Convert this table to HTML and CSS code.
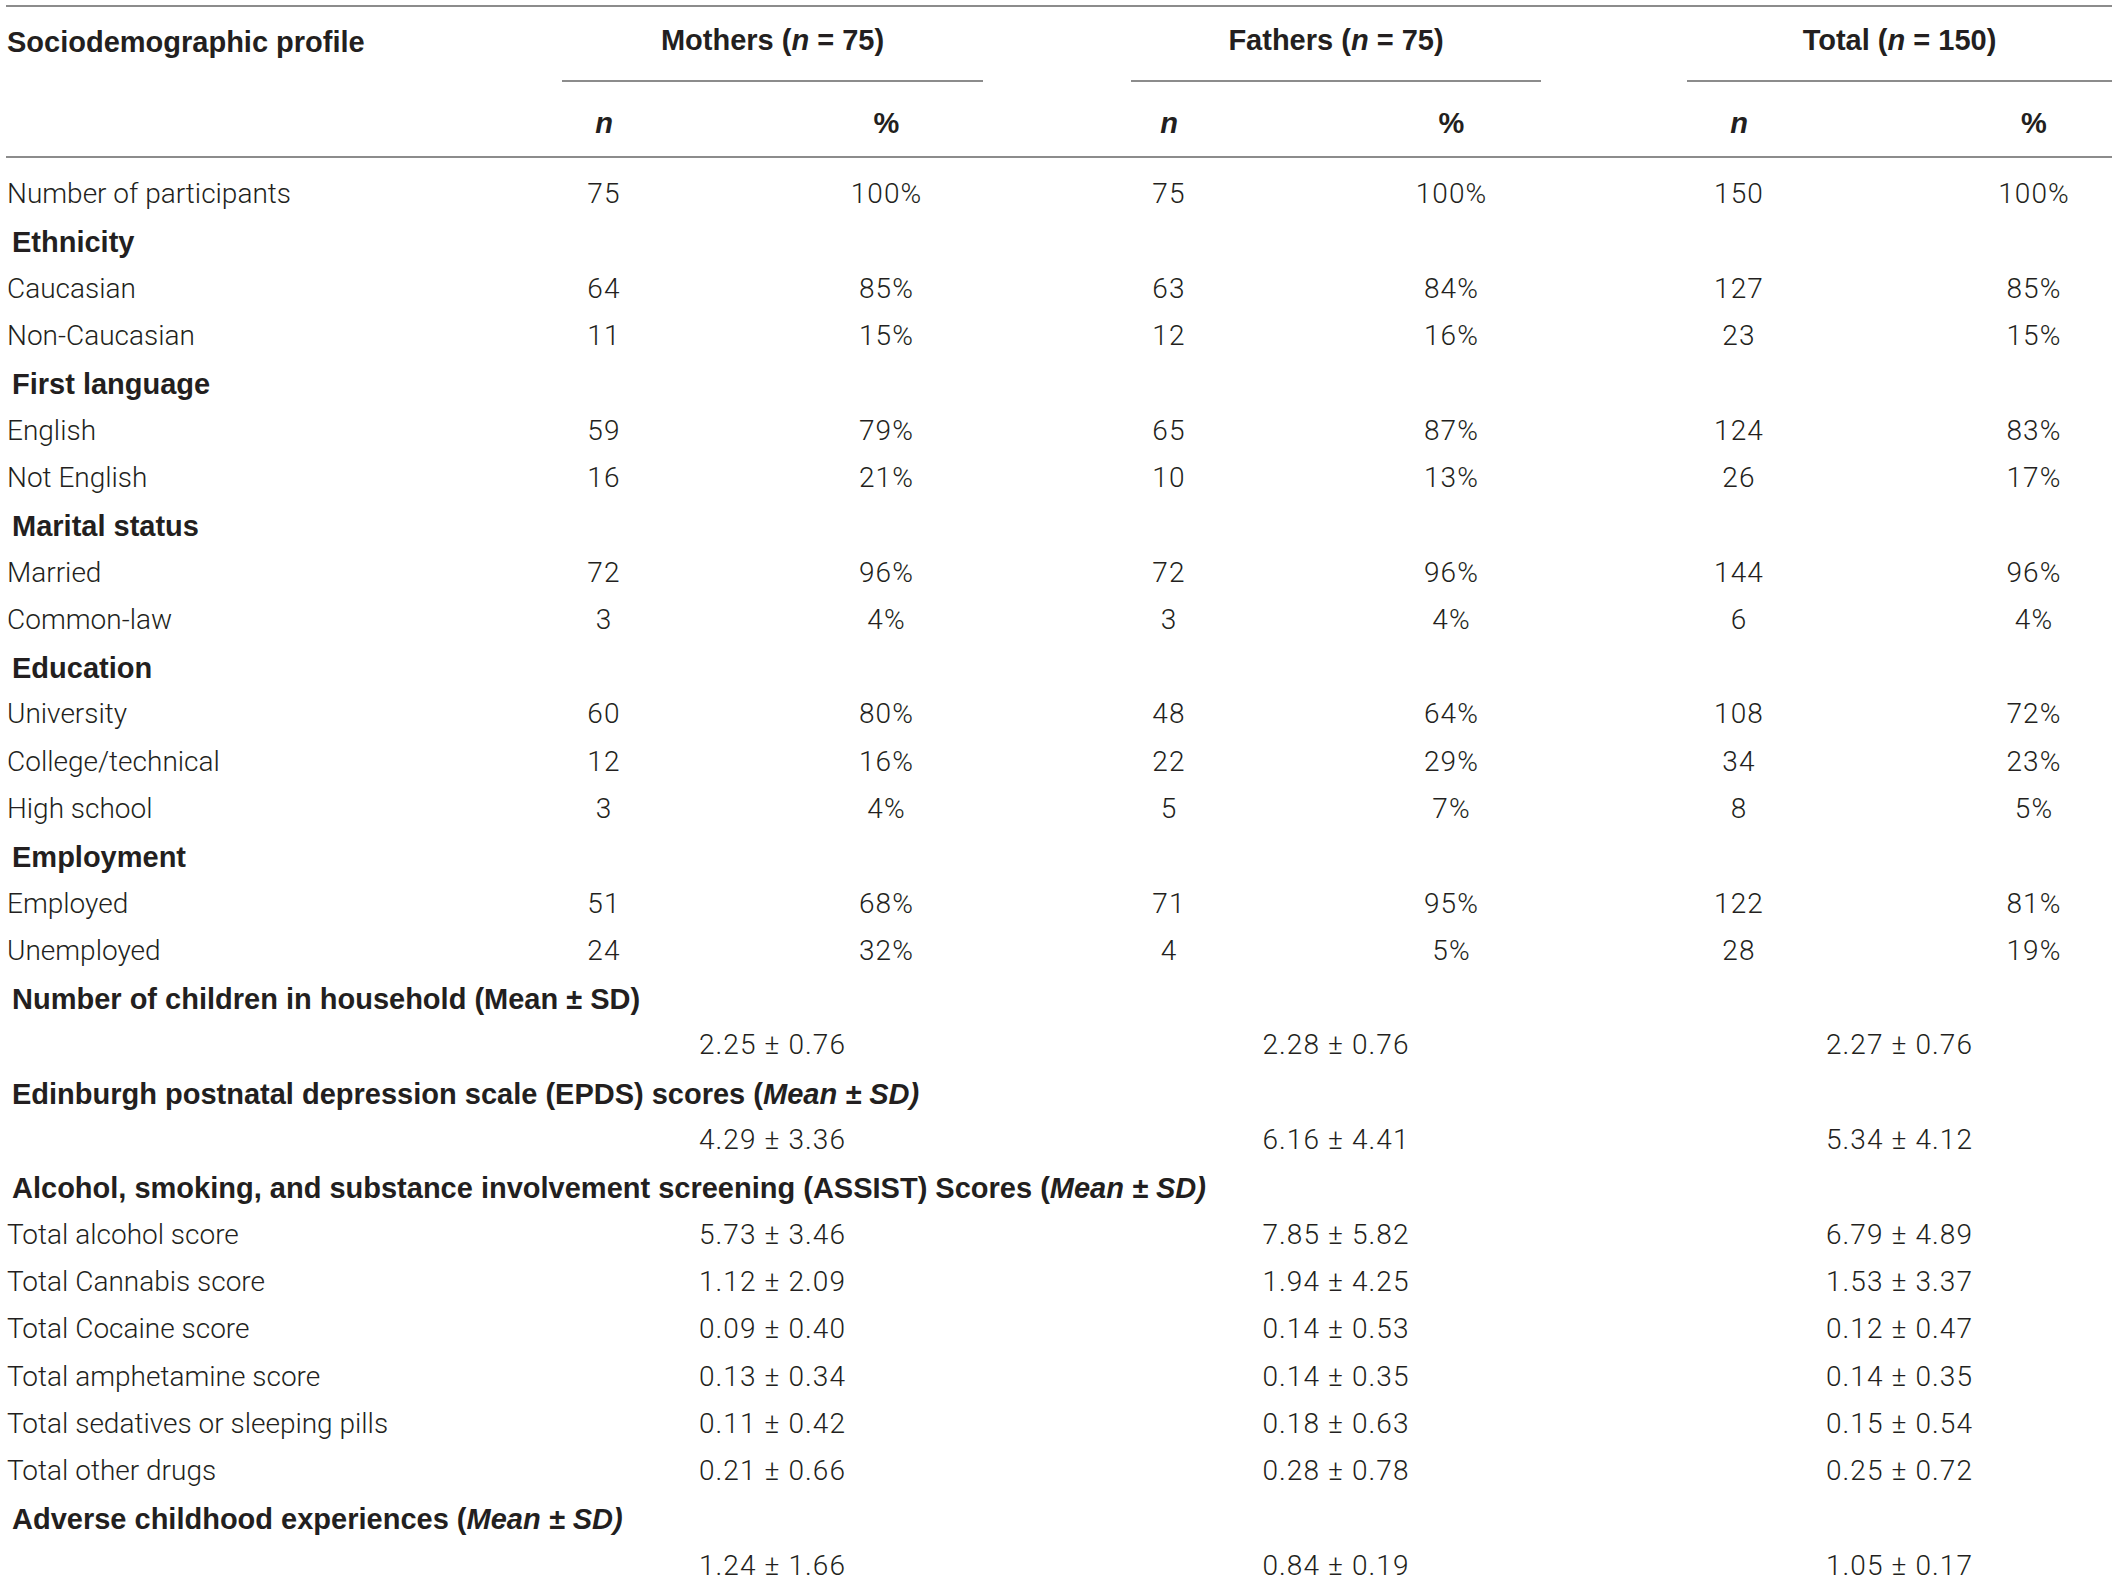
FILE: index.html
```html
<!DOCTYPE html>
<html lang="en">
<head>
<meta charset="utf-8">
<title>Sociodemographic profile</title>
<link rel="stylesheet" href="styles.css">
</head>
<body>
<div class="table">
  <div class="thead">
    <div class="hrow top">
      <div class="hlabel">Sociodemographic profile</div>
      <div class="group g-m"><span class="gtitle">Mothers (<i>n</i> = 75)</span></div>
      <div class="group g-f"><span class="gtitle">Fathers (<i>n</i> = 75)</span></div>
      <div class="group g-t"><span class="gtitle">Total (<i>n</i> = 150)</span></div>
    </div>
    <div class="hrow sub">
      <div></div>
      <div class="c"><i>n</i></div><div class="c">%</div>
      <div class="c"><i>n</i></div><div class="c">%</div>
      <div class="c"><i>n</i></div><div class="c last">%</div>
    </div>
  </div>
  <div class="tbody">
    <div class="row"><div class="lab">Number of participants</div><div class="c">75</div><div class="c">100%</div><div class="c">75</div><div class="c">100%</div><div class="c">150</div><div class="c last">100%</div></div>
    <div class="row sec"><div class="sh">Ethnicity</div></div>
    <div class="row"><div class="lab">Caucasian</div><div class="c">64</div><div class="c">85%</div><div class="c">63</div><div class="c">84%</div><div class="c">127</div><div class="c last">85%</div></div>
    <div class="row"><div class="lab">Non-Caucasian</div><div class="c">11</div><div class="c">15%</div><div class="c">12</div><div class="c">16%</div><div class="c">23</div><div class="c last">15%</div></div>
    <div class="row sec"><div class="sh">First language</div></div>
    <div class="row"><div class="lab">English</div><div class="c">59</div><div class="c">79%</div><div class="c">65</div><div class="c">87%</div><div class="c">124</div><div class="c last">83%</div></div>
    <div class="row"><div class="lab">Not English</div><div class="c">16</div><div class="c">21%</div><div class="c">10</div><div class="c">13%</div><div class="c">26</div><div class="c last">17%</div></div>
    <div class="row sec"><div class="sh">Marital status</div></div>
    <div class="row"><div class="lab">Married</div><div class="c">72</div><div class="c">96%</div><div class="c">72</div><div class="c">96%</div><div class="c">144</div><div class="c last">96%</div></div>
    <div class="row"><div class="lab">Common-law</div><div class="c">3</div><div class="c">4%</div><div class="c">3</div><div class="c">4%</div><div class="c">6</div><div class="c last">4%</div></div>
    <div class="row sec"><div class="sh">Education</div></div>
    <div class="row"><div class="lab">University</div><div class="c">60</div><div class="c">80%</div><div class="c">48</div><div class="c">64%</div><div class="c">108</div><div class="c last">72%</div></div>
    <div class="row"><div class="lab">College/technical</div><div class="c">12</div><div class="c">16%</div><div class="c">22</div><div class="c">29%</div><div class="c">34</div><div class="c last">23%</div></div>
    <div class="row"><div class="lab">High school</div><div class="c">3</div><div class="c">4%</div><div class="c">5</div><div class="c">7%</div><div class="c">8</div><div class="c last">5%</div></div>
    <div class="row sec"><div class="sh">Employment</div></div>
    <div class="row"><div class="lab">Employed</div><div class="c">51</div><div class="c">68%</div><div class="c">71</div><div class="c">95%</div><div class="c">122</div><div class="c last">81%</div></div>
    <div class="row"><div class="lab">Unemployed</div><div class="c">24</div><div class="c">32%</div><div class="c">4</div><div class="c">5%</div><div class="c">28</div><div class="c last">19%</div></div>
    <div class="row sec"><div class="sh">Number of children in household (Mean ± SD)</div></div>
    <div class="row"><div class="lab"></div><div class="m g-m">2.25 ± 0.76</div><div class="m g-f">2.28 ± 0.76</div><div class="m g-t">2.27 ± 0.76</div></div>
    <div class="row sec"><div class="sh">Edinburgh postnatal depression scale (EPDS) scores (<i>Mean ± SD)</i></div></div>
    <div class="row"><div class="lab"></div><div class="m g-m">4.29 ± 3.36</div><div class="m g-f">6.16 ± 4.41</div><div class="m g-t">5.34 ± 4.12</div></div>
    <div class="row sec"><div class="sh">Alcohol, smoking, and substance involvement screening (ASSIST) Scores (<i>Mean ± SD)</i></div></div>
    <div class="row"><div class="lab">Total alcohol score</div><div class="m g-m">5.73 ± 3.46</div><div class="m g-f">7.85 ± 5.82</div><div class="m g-t">6.79 ± 4.89</div></div>
    <div class="row"><div class="lab">Total Cannabis score</div><div class="m g-m">1.12 ± 2.09</div><div class="m g-f">1.94 ± 4.25</div><div class="m g-t">1.53 ± 3.37</div></div>
    <div class="row"><div class="lab">Total Cocaine score</div><div class="m g-m">0.09 ± 0.40</div><div class="m g-f">0.14 ± 0.53</div><div class="m g-t">0.12 ± 0.47</div></div>
    <div class="row"><div class="lab">Total amphetamine score</div><div class="m g-m">0.13 ± 0.34</div><div class="m g-f">0.14 ± 0.35</div><div class="m g-t">0.14 ± 0.35</div></div>
    <div class="row"><div class="lab">Total sedatives or sleeping pills</div><div class="m g-m">0.11 ± 0.42</div><div class="m g-f">0.18 ± 0.63</div><div class="m g-t">0.15 ± 0.54</div></div>
    <div class="row"><div class="lab">Total other drugs</div><div class="m g-m">0.21 ± 0.66</div><div class="m g-f">0.28 ± 0.78</div><div class="m g-t">0.25 ± 0.72</div></div>
    <div class="row sec"><div class="sh">Adverse childhood experiences (<i>Mean ± SD)</i></div></div>
    <div class="row"><div class="lab"></div><div class="m g-m">1.24 ± 1.66</div><div class="m g-f">0.84 ± 0.19</div><div class="m g-t">1.05 ± 0.17</div></div>
  </div>
</div>
</body>
</html>
```
FILE: styles.css
```css
html, body {
  margin: 0;
  padding: 0;
  background: #ffffff;
}

body {
  font-family: Roboto, "Liberation Sans", Arial, sans-serif;
  color: #231f20;
  font-size: 28px;
  font-weight: 300;
}

.table {
  margin-left: 6px;
  width: 2106px;
}

.thead {
  border-top: 2px solid #8c8c8c;
  border-bottom: 2px solid #8c8c8c;
  margin-top: 5px;
}

.hrow,
.row {
  display: grid;
  grid-template-columns: 457px 282px 283px 282px 283px 292px 227px;
  align-items: center;
}

.hrow {
  font-family: "Liberation Sans", Arial, sans-serif;
  font-weight: 700;
  font-size: 29px;
}

.hrow.top {
  height: 75px;
}

.hrow.sub {
  height: 74px;
  padding-top: 8px;
  box-sizing: border-box;
}

.hlabel {
  padding-left: 1px;
  align-self: start;
  padding-top: 19px;
}

.group {
  grid-column: span 2;
  align-self: stretch;
  display: flex;
  align-items: center;
  justify-content: center;
  border-bottom: 2px solid #8c8c8c;
  padding-bottom: 6px;
}

.g-m { margin-left: 99px; margin-right: 45px; }
.g-f { margin-left: 103px; margin-right: 52px; }
.g-t { margin-left: 94px; margin-right: 0; }

.tbody {
  padding-top: 12px;
}

.row {
  height: 47.3px;
}

.c {
  text-align: center;
}

.row .c,
.row .m {
  letter-spacing: 1.1px;
}

.c.last {
  padding-left: 71px;
}

.lab {
  padding-left: 1px;
  white-space: nowrap;
}

.m {
  grid-column: span 2;
  text-align: center;
}

.row.sec {
  display: flex;
  align-items: center;
  padding-top: 4px;
  box-sizing: border-box;
}

.sh {
  padding-left: 6px;
  font-family: "Liberation Sans", Arial, sans-serif;
  font-weight: 700;
  font-size: 29px;
  white-space: nowrap;
}
```
